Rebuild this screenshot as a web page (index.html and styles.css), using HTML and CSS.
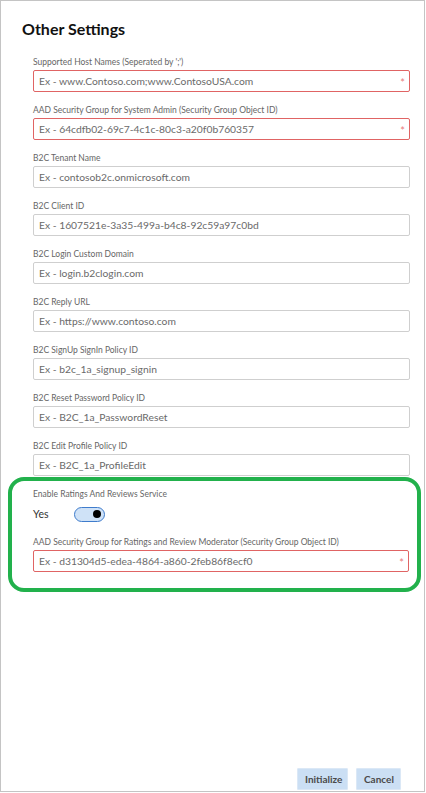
FILE: index.html
```html
<!DOCTYPE html>
<html>
<head>
<meta charset="utf-8">
<link rel="stylesheet" href="styles.css">
</head>
<body>
<div class="frame">
  <h1 class="title">Other Settings</h1>
  <div class="field">
    <div class="label">Supported Host Names (Seperated by ';')</div>
    <div class="input required"><span class="ph">Ex - www.Contoso.com;www.ContosoUSA.com</span><span class="req">*</span></div>
  </div>
  <div class="field">
    <div class="label">AAD Security Group for System Admin (Security Group Object ID)</div>
    <div class="input required"><span class="ph">Ex - 64cdfb02-69c7-4c1c-80c3-a20f0b760357</span><span class="req">*</span></div>
  </div>
  <div class="field">
    <div class="label">B2C Tenant Name</div>
    <div class="input"><span class="ph">Ex - contosob2c.onmicrosoft.com</span></div>
  </div>
  <div class="field">
    <div class="label">B2C Client ID</div>
    <div class="input"><span class="ph">Ex - 1607521e-3a35-499a-b4c8-92c59a97c0bd</span></div>
  </div>
  <div class="field">
    <div class="label">B2C Login Custom Domain</div>
    <div class="input"><span class="ph">Ex - login.b2clogin.com</span></div>
  </div>
  <div class="field">
    <div class="label">B2C Reply URL</div>
    <div class="input"><span class="ph">Ex - https://www.contoso.com</span></div>
  </div>
  <div class="field">
    <div class="label">B2C SignUp SignIn Policy ID</div>
    <div class="input"><span class="ph">Ex - b2c_1a_signup_signin</span></div>
  </div>
  <div class="field">
    <div class="label">B2C Reset Password Policy ID</div>
    <div class="input"><span class="ph">Ex - B2C_1a_PasswordReset</span></div>
  </div>
  <div class="field">
    <div class="label">B2C Edit Profile Policy ID</div>
    <div class="input"><span class="ph">Ex - B2C_1a_ProfileEdit</span></div>
  </div>
  <div class="highlight">
    <div class="label">Enable Ratings And Reviews Service</div>
    <div class="toggle-row">
      <span class="yes">Yes</span>
      <span class="toggle"><span class="knob"></span></span>
    </div>
    <div class="label second">AAD Security Group for Ratings and Review Moderator (Security Group Object ID)</div>
    <div class="input required"><span class="ph">Ex - d31304d5-edea-4864-a860-2feb86f8ecf0</span><span class="req">*</span></div>
  </div>
  <div class="footer">
    <button class="btn btn-init">Initialize</button>
    <button class="btn btn-cancel">Cancel</button>
  </div>
</div>
</body>
</html>
```

FILE: styles.css
```css
* { box-sizing: border-box; }
html, body { margin: 0; padding: 0; background: #fff; }
body { font-family: Lato, "Open Sans", Arial, sans-serif; }

.frame {
  width: 425px;
  height: 792px;
  border: 1px solid #c4c4c4;
  display: flex;
  flex-direction: column;
  padding: 17px 14px 0 0;
}

.title {
  margin: 0 0 4px 21px;
  font-size: 16px;
  line-height: 22px;
  font-weight: 700;
  color: #111;
}

.field {
  padding: 11px 0 0 32px;
}

.label {
  font-size: 8.5px;
  line-height: 14px;
  color: #666;
  margin-bottom: 1px;
  white-space: nowrap;
}

.input {
  height: 22px;
  border: 1px solid #cfcfcf;
  border-radius: 2px;
  display: flex;
  align-items: center;
  justify-content: space-between;
  padding: 0 4px 0 5px;
}
.input.required { border-color: #e06464; }

.ph {
  font-size: 10.3px;
  color: #6a6a6a;
  white-space: nowrap;
}
.req {
  color: #ea7b7b;
  font-size: 11px;
  line-height: 1;
  padding-top: 2px;
}

.highlight {
  margin: 1px -11px 0 7px;
  border: 4px solid #22b14c;
  border-radius: 16px;
  padding: 6px 8px 16px 21px;
}

.toggle-row {
  display: flex;
  align-items: center;
  height: 20px;
  margin-top: 3px;
}
.yes {
  font-size: 10.5px;
  color: #333;
  width: 41px;
}
.toggle {
  width: 31px;
  height: 15px;
  border: 1px solid #3f7ccc;
  border-radius: 8px;
  background: #cfe2f7;
  display: flex;
  align-items: center;
  justify-content: flex-end;
  padding-right: 3px;
}
.knob {
  width: 8px;
  height: 8px;
  border-radius: 50%;
  background: #000;
}

.label.second { margin-top: 11px; }

.footer {
  margin-top: auto;
  display: flex;
  justify-content: flex-end;
  gap: 8px;
  padding: 0 9px 1px 0;
}
.btn {
  height: 22px;
  border: 1px solid #dbe8f6;
  background: #cbdff4;
  color: #4a4a4a;
  font-family: Lato, "Open Sans", sans-serif;
  font-weight: 700;
  font-size: 10px;
  padding: 0 7px;
  border-radius: 1px;
}
.btn-init { width: 51px; }
.btn-cancel { width: 45px; }
```
